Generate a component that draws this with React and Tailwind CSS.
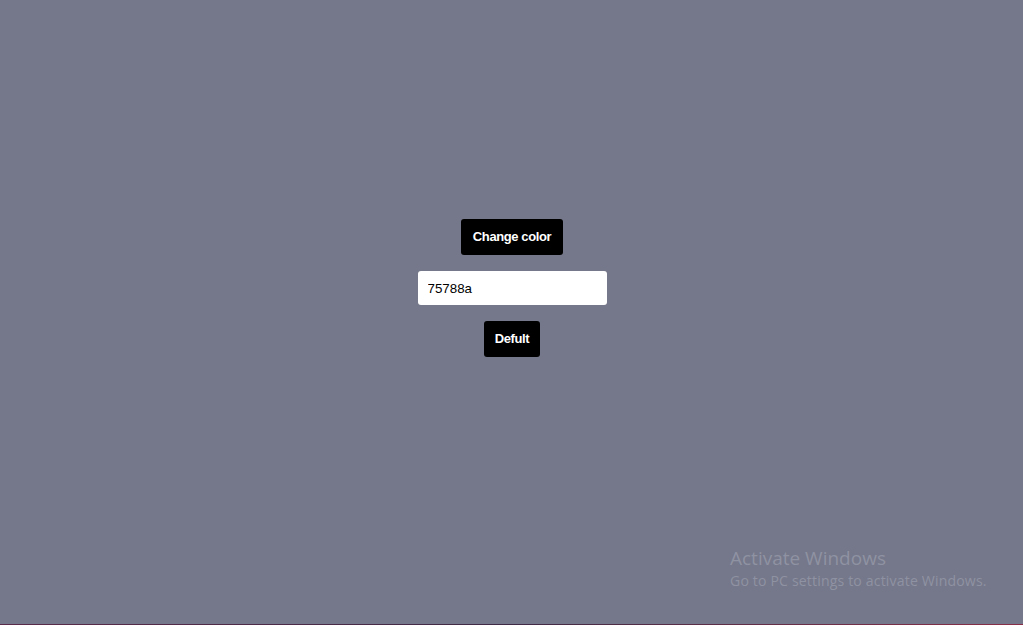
export default function App() {
  return (
    <div className="relative h-[625px] w-full overflow-hidden bg-[#75788a] font-['Liberation_Sans',Arial,sans-serif]">
      <div className="flex flex-col items-center pt-[219px] pl-px">
        <button className="h-9 rounded-[3px] bg-black px-3 text-[13px] font-bold tracking-[-0.4px] text-white">
          Change color
        </button>
        <input
          defaultValue="75788a"
          className="mt-4 h-[34px] w-[189px] rounded-[3px] bg-white px-[10px] text-[13.33px] text-black outline-none"
        />
        <button className="mt-4 h-9 rounded-[3px] bg-black px-[11px] text-[13px] font-bold tracking-[-0.4px] text-white">
          Defult
        </button>
      </div>

      {/* windows activation watermark */}
      <div className="absolute left-[730px] top-[545px] font-['Open_Sans',sans-serif] text-[#8f92a2]">
        <p className="text-[19px] leading-[26px]">Activate Windows</p>
        <p className="text-[14.1px] leading-[20px] tracking-[0.15px]">Go to PC settings to activate Windows.</p>
      </div>

      <div className="absolute bottom-0 left-0 h-px w-full bg-gradient-to-r from-[#5a2a4a] via-[#3f2a45] to-[#8a2e48]" />
    </div>
  )
}
